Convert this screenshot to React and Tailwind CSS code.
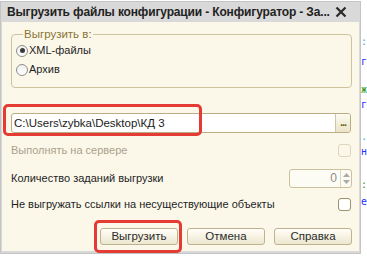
import React from 'react';

function Radio({ checked, label }) {
  return (
    <div className="flex items-center h-[19px]">
      <span className="w-[12px] h-[12px] rounded-full border border-[#8d8d8d] bg-gradient-to-b from-[#f0f0f0] to-white flex items-center justify-center">
        {checked && <span className="w-[5px] h-[5px] rounded-full bg-[#3a3a3a]" />}
      </span>
      <span className="ml-[1px] text-[#1e1e1e]">{label}</span>
    </div>
  );
}

function Checkbox({ disabled }) {
  return (
    <span
      className={
        disabled
          ? 'w-[13px] h-[13px] rounded-[3px] border border-[#dcd6bd] bg-[#fbf8ea]'
          : 'w-[13px] h-[13px] rounded-[3px] border border-[#9b916c] bg-white'
      }
    />
  );
}

function Button({ children }) {
  return (
    <button className="w-[78px] h-[17px] rounded-[3px] border border-[#bdb38e] bg-gradient-to-b from-[#fffef8] to-[#ede7cf] text-[11.5px] leading-none text-[#2b2b2b]">
      {children}
    </button>
  );
}

export default function App() {
  return (
    <div className="w-[367px] h-[259px] bg-white flex overflow-hidden font-['Liberation_Sans',Arial,sans-serif] relative">
      <div className="w-[361px] h-[253px] mt-[1px] bg-[#d9d9d9] border border-[#c4c4c4] px-[1px] pb-[2px] flex flex-col">
        {/* title */}
        <div className="h-[20px] flex items-center pl-[5px] pr-[12px] shrink-0">
          <span className="text-[12px] font-bold text-[#222] tracking-[-0.15px] whitespace-nowrap">
            Выгрузить файлы конфигурации - Конфигуратор - За...
          </span>
          <svg className="ml-auto" width="12" height="12" viewBox="0 0 12 12">
            <path d="M1.5 1.5 L10.5 10.5 M10.5 1.5 L1.5 10.5" stroke="#2a2a2a" strokeWidth="2.2" />
          </svg>
        </div>

        {/* body */}
        <div className="flex-1 bg-[#fbf8ea] pl-[9px] pr-[7px] flex flex-col text-[11px]">
          <fieldset className="mt-[5px] h-[61px] border border-[#cdc39c] rounded-[4px] px-[4px] pb-0">
            <legend className="ml-[7px] px-[1px] leading-[14px] text-[11.5px] text-[#8a7434]">Выгрузить в:</legend>
            <Radio checked label="XML-файлы" />
            <Radio label="Архив" />
          </fieldset>

          {/* path */}
          <div className="mt-[25px] h-[20px] flex border border-[#b9ae85] rounded-[3px] bg-white overflow-hidden mr-[1px]">
            <span className="flex-1 pl-[2px] leading-[18px] text-[11.5px] text-[#1a1a1a]">C:\Users\zybka\Desktop\КД 3</span>
            <span className="w-[15px] border-l border-[#cfc6a2] bg-gradient-to-b from-[#fdfbf0] to-[#ebe4c8] leading-[16px] text-center font-bold text-[#6b5a20] tracking-[-1px]">...</span>
          </div>

          <div className="mt-[8px] h-[18px] flex items-center justify-between pr-[1px]">
            <span className="text-[#aaa08a]">Выполнять на сервере</span>
            <Checkbox disabled />
          </div>

          <div className="mt-[10px] h-[18px] flex items-center justify-between">
            <span className="text-[#1e1e1e]">Количество заданий выгрузки</span>
            <div className="w-[63px] h-[19px] flex border border-[#cbc19b] rounded-[3px] bg-[#fdfcf4] overflow-hidden">
              <span className="flex-1 text-right pr-[3px] text-[12px] leading-[17px] text-[#8c8c8c]">0</span>
              <span className="w-[11px] border-l border-[#ddd6bb] flex flex-col items-center justify-center gap-[3px]">
                <svg width="7" height="4" viewBox="0 0 7 4"><path d="M0 4 L3.5 0 L7 4 Z" fill="#a9a9a9" /></svg>
                <svg width="7" height="4" viewBox="0 0 7 4"><path d="M0 0 L3.5 4 L7 0 Z" fill="#a9a9a9" /></svg>
              </span>
            </div>
          </div>

          <div className="mt-[8px] h-[18px] flex items-center justify-between pr-[1px]">
            <span className="text-[#1e1e1e]">Не выгружать ссылки на несуществующие объекты</span>
            <Checkbox />
          </div>

          <div className="mt-[15px] flex justify-end gap-[9px]">
            <Button>Выгрузить</Button>
            <Button>Отмена</Button>
            <Button>Справка</Button>
          </div>
        </div>
      </div>

      {/* code behind the window */}
      <div className="flex-1 flex flex-col text-[10px] leading-[6px] font-['DejaVu_Sans_Mono',monospace] overflow-hidden">
        <span className="mt-[39px] text-[#2bb5d8]">:</span>
        <span className="mt-[14px] text-[#2a2aff]">г</span>
        <span className="mt-[22px] text-[#3a9a1a]">ж</span>
        <span className="mt-[9px] text-[#2a2aff]">г</span>
        <span className="mt-[26px] text-[#2bb5d8]">.</span>
        <span className="mt-[9px] text-[#2a2aff]">н</span>
        <span className="mt-[27px] text-[#3a9a1a]">:</span>
        <span className="mt-[11px] text-[#2a2aff]">е</span>
      </div>

      {/* red highlights */}
      <div className="absolute left-[3px] top-[104px] w-[199px] h-[32px] border-[3px] border-[#e53b35] rounded-[5px]" />
      <div className="absolute left-[94px] top-[220px] w-[88px] h-[33px] border-[3px] border-[#e53b35] rounded-[5px]" />
    </div>
  );
}
